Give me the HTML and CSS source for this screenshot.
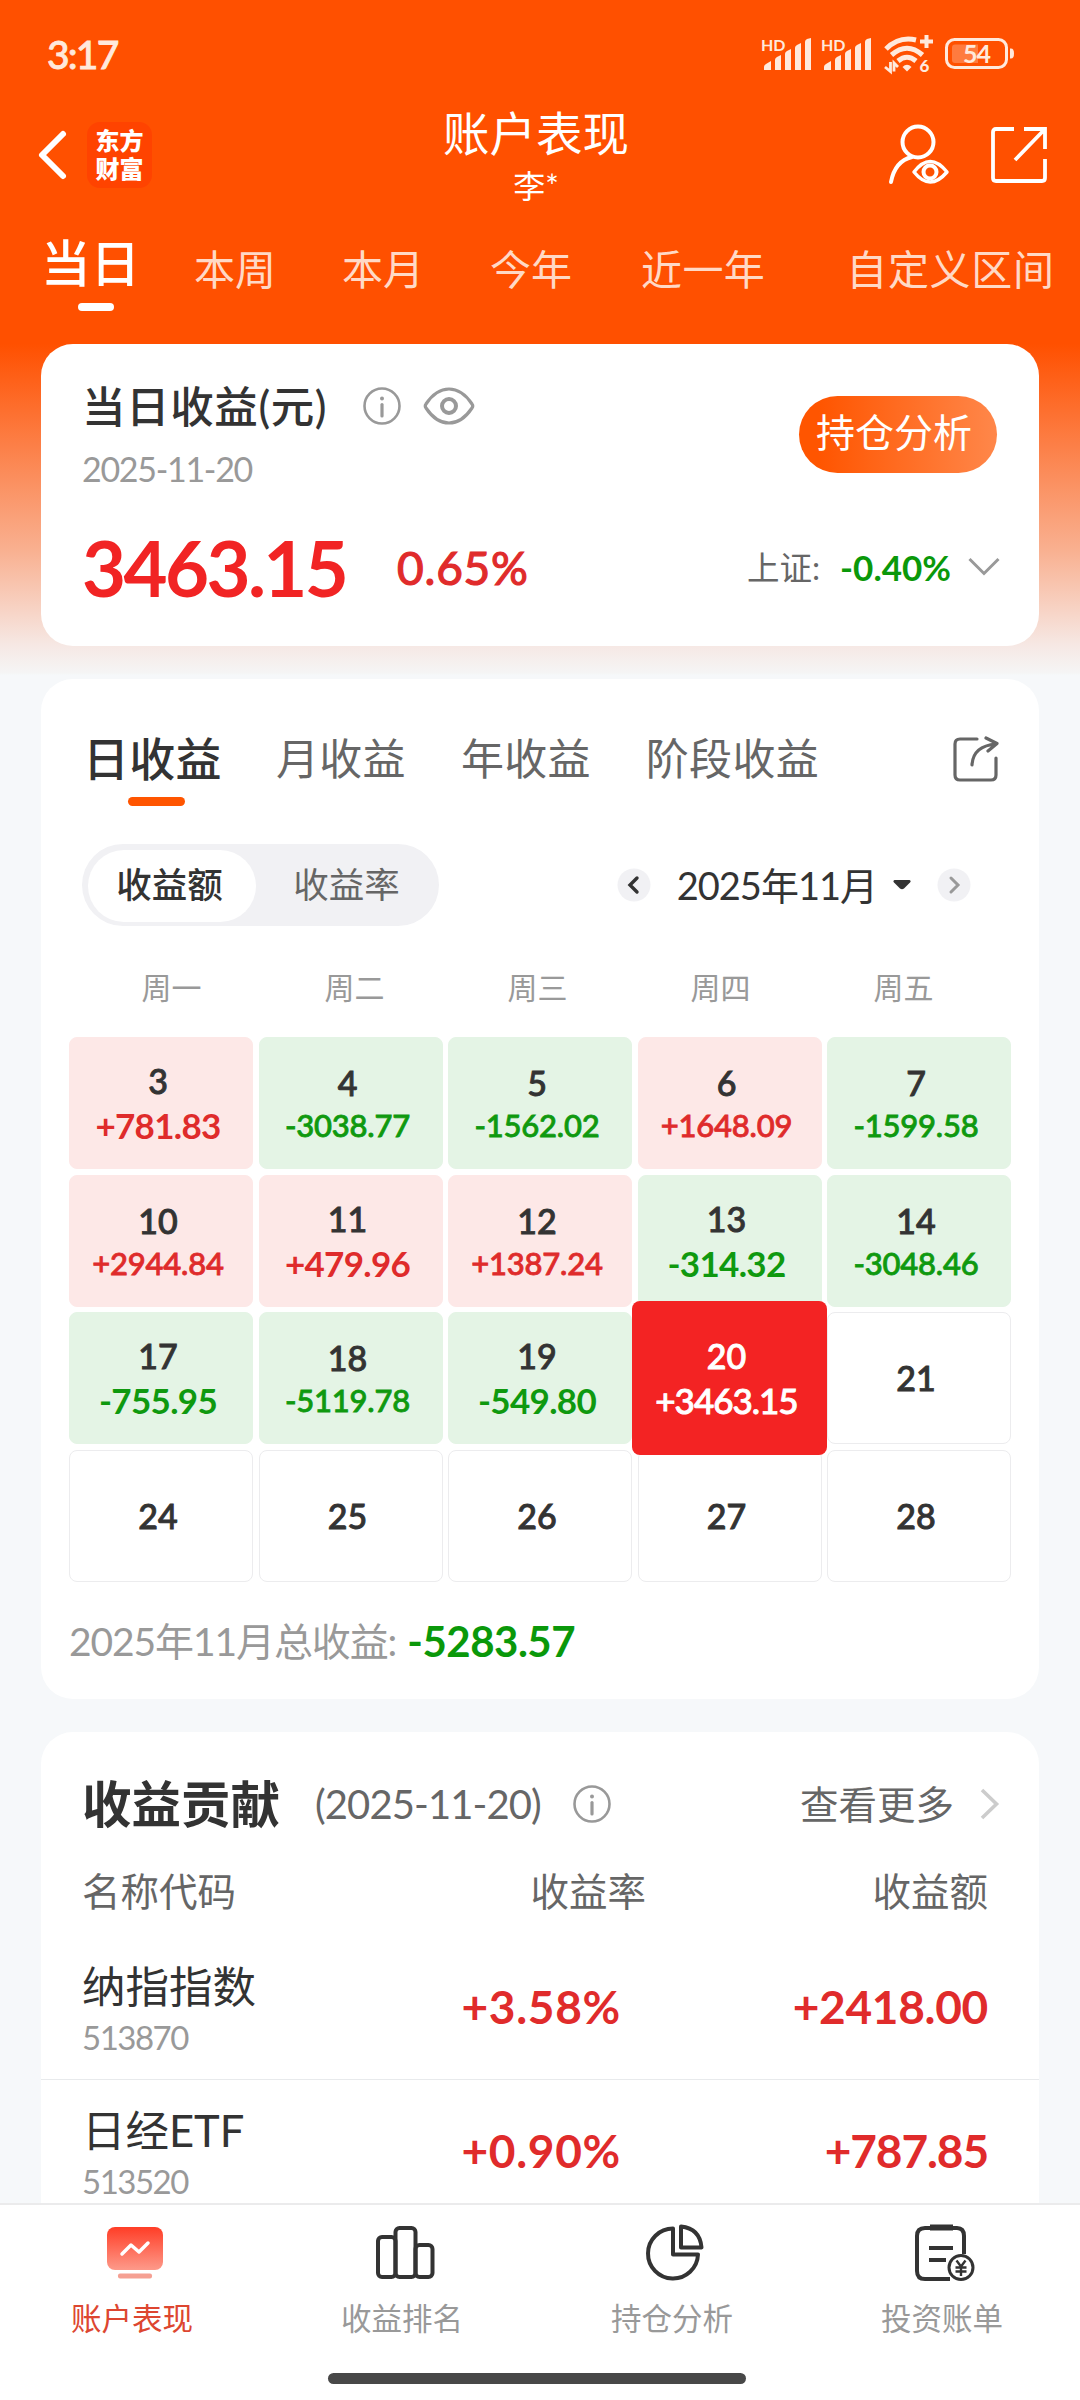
FILE: index.html
```html
<!DOCTYPE html>
<html lang="zh-CN">
<head>
<meta charset="utf-8">
<title>账户表现</title>
<link rel="stylesheet" href="styles.css">
</head>
<body>
<div class="screen">
  <div class="status-bar">
    <span class="clock">3:17</span>
    <div class="status-icons">
      <svg class="signal" width="52" height="36" viewBox="0 0 52 36" fill="#ffe9dc"><text x="0" y="15" class="hd">HD</text><path d="M3 34v-3q0-2 2-3l5-3v9zM14 34V24q0-2 2-3l4-2v15zM24 34V18q0-2 2-3l4-2v21zM34 34V12q0-2 2-3l4-2v27zM44 34V6q0-2 2-3l4-1v32z"/></svg>
      <svg class="signal" width="52" height="36" viewBox="0 0 52 36" fill="#ffe9dc"><text x="0" y="15" class="hd">HD</text><path d="M3 34v-3q0-2 2-3l5-3v9zM14 34V24q0-2 2-3l4-2v15zM24 34V18q0-2 2-3l4-2v21zM34 34V12q0-2 2-3l4-2v27zM44 34V6q0-2 2-3l4-1v32z"/></svg>
      <svg class="wifi" width="50" height="42" viewBox="0 -2 50 42" fill="none" stroke="#ffe9dc"><path d="M2 14Q15 1 32 5" stroke-width="5"/><path d="M7.500 20Q23 6.500 38.500 20" stroke-width="5"/><path d="M14 26Q23 18.500 32 26" stroke-width="5"/><path d="M18.500 32q4.500-4.500 9 0L23 36.500z" fill="#ffe9dc" stroke="none"/><path d="M36 6.500h13M42.500 0v13" stroke-width="4"/><path d="M6.500 27v9.500L1 32M10 36.500V28l4 4" stroke-width="2.800"/><text x="35.500" y="36.500" class="wifi-gen">6</text></svg>
      <svg class="battery" width="70" height="32" viewBox="0 0 70 32"><rect x="1.500" y="1.500" width="60" height="28" rx="8" fill="none" stroke="#ffe9dc" stroke-width="3"/><path d="M10 6.500h23v18.500H10q-3 0-3-3v-12.500q0-3 3-3z" fill="#ff7b3f"/><path d="M65 10.500h1q3 0 3 5t-3 5h-1z" fill="#ffe9dc"/><text x="31.500" y="24.500" class="battery-level">54</text></svg>
    </div>
  </div>

  <header class="header">
    <svg class="back" width="30" height="50" viewBox="0 0 30 50" fill="none" stroke="#fff" stroke-width="6" stroke-linecap="round" stroke-linejoin="round"><path d="M25 4 4 25l21 21"/></svg>
    <div class="logo"><span>东方</span><span>财富</span></div>
    <div class="title"><h1>账户表现</h1><span>李*</span></div>
    <svg class="user-icon" width="62" height="62" viewBox="0 0 62 62" fill="none" stroke="#fff" stroke-width="4" stroke-linecap="round"><ellipse cx="30" cy="18" rx="15.500" ry="15.500"/><path d="M3 58Q7 37 24 33"/><path d="M26 48Q42 27 59 48Q42 68 26 48z" stroke-linejoin="round" stroke-width="3.500"/><circle cx="42" cy="48" r="6.500"/></svg>
    <svg class="open-icon" width="56" height="58" viewBox="0 0 56 58" fill="none" stroke="#fff" stroke-width="3.800"><path d="M23 3H5Q2 3 2 6v46q0 3 3 3h46q3 0 3-3V33"/><path d="M33 3h21v20M54 3 24 34"/></svg>
  </header>

  <nav class="periods">
    <div class="period active"><span>当日</span><i></i></div>
    <div class="period week">本周</div>
    <div class="period">本月</div>
    <div class="period">今年</div>
    <div class="period year">近一年</div>
    <div class="period custom">自定义区间</div>
  </nav>

  <main class="content">
    <section class="card summary">
      <div class="summary-top">
        <div>
          <div class="summary-title">
            <h2>当日收益(元)</h2>
            <svg class="info" width="38" height="38" viewBox="0 0 38 38"><circle cx="19" cy="19" r="17.500" fill="none" stroke="#999" stroke-width="2.600"/><circle cx="19" cy="11.500" r="2" fill="#999"/><path d="M19 17.500v11.500" stroke="#999" stroke-width="3.200" stroke-linecap="round"/></svg>
            <svg class="eye" width="52" height="40" viewBox="0 0 52 40" fill="none" stroke="#999" stroke-width="3.200"><path d="M3 18Q13 3 26 3t23 15q1.500 2 0 4Q39 37 26 37T3 22q-1.500-2 0-4z"/><circle cx="26" cy="20" r="7" stroke-width="4"/></svg>
          </div>
          <div class="summary-date">2025-11-20</div>
        </div>
        <button class="analyse">持仓分析</button>
      </div>
      <div class="summary-bottom">
        <span class="amount">3463.15</span>
        <span class="rate">0.65%</span>
        <span class="index-name">上证:</span>
        <span class="index-rate">-0.40%</span>
        <svg width="32" height="20" viewBox="0 0 32 20" fill="none" stroke="#999" stroke-width="3"><path d="m1.500 2 14.500 14.500L30.500 2"/></svg>
      </div>
    </section>

    <section class="card calendar">
      <div class="cal-tabs">
        <div class="cal-tab active"><span>日收益</span><i></i></div>
        <div class="cal-tab">月收益</div>
        <div class="cal-tab">年收益</div>
        <div class="cal-tab">阶段收益</div>
        <svg class="share" width="46" height="46" viewBox="0 0 46 46" fill="none" stroke="#666" stroke-width="3.200" stroke-linecap="round" stroke-linejoin="round"><path d="M24 3H7Q2 3 2 8v31q0 5 5 5h31q5 0 5-5V22"/><path d="M19 29Q20 10 43 8M33 2l11 5.500L35 15"/></svg>
      </div>
      <div class="cal-controls">
        <div class="segment"><span class="on">收益额</span><span>收益率</span></div>
        <div class="month-nav">
          <svg width="34" height="34" viewBox="0 0 34 34"><circle cx="17" cy="17" r="16.500" fill="#f1f1f4"/><path d="m20 10-7 7 7 7" fill="none" stroke="#333" stroke-width="3.400" stroke-linecap="round"/></svg>
          <span class="month">2025年11月</span>
          <svg class="caret" width="18" height="10" viewBox="0 0 18 10"><path d="M1.500 0h15q2 1 .5 2.500L11 8.500q-2 1.500-4 0L1 2.500Q-.5 1 1.500 0z" fill="#333"/></svg>
          <svg width="34" height="34" viewBox="0 0 34 34"><circle cx="17" cy="17" r="16.500" fill="#f1f1f4"/><path d="m14 10 7 7-7 7" fill="none" stroke="#999" stroke-width="3" stroke-linecap="round"/></svg>
        </div>
      </div>
      <div class="weekdays"><span>周一</span><span>周二</span><span>周三</span><span>周四</span><span>周五</span></div>
      <div class="days">
        <div class="day up"><b>3</b><span>+781.83</span></div>
        <div class="day down long"><b>4</b><span>-3038.77</span></div>
        <div class="day down long"><b>5</b><span>-1562.02</span></div>
        <div class="day up long"><b>6</b><span>+1648.09</span></div>
        <div class="day down long"><b>7</b><span>-1599.58</span></div>
        <div class="day up long"><b>10</b><span>+2944.84</span></div>
        <div class="day up"><b>11</b><span>+479.96</span></div>
        <div class="day up long"><b>12</b><span>+1387.24</span></div>
        <div class="day down"><b>13</b><span>-314.32</span></div>
        <div class="day down long"><b>14</b><span>-3048.46</span></div>
        <div class="day down"><b>17</b><span>-755.95</span></div>
        <div class="day down long"><b>18</b><span>-5119.78</span></div>
        <div class="day down"><b>19</b><span>-549.80</span></div>
        <div class="day selected"><b>20</b><span>+3463.15</span></div>
        <div class="day"><b>21</b></div>
        <div class="day"><b>24</b></div>
        <div class="day"><b>25</b></div>
        <div class="day"><b>26</b></div>
        <div class="day"><b>27</b></div>
        <div class="day"><b>28</b></div>
      </div>
      <div class="total"><span>2025年11月总收益:</span><strong>-5283.57</strong></div>
    </section>

    <section class="card contribution">
      <div class="contrib-head">
        <h2>收益贡献</h2>
        <span class="contrib-date">(2025-11-20)</span>
        <svg class="info" width="38" height="38" viewBox="0 0 38 38"><circle cx="19" cy="19" r="17.500" fill="none" stroke="#999" stroke-width="2.600"/><circle cx="19" cy="11.500" r="2" fill="#999"/><path d="M19 17.500v11.500" stroke="#999" stroke-width="3.200" stroke-linecap="round"/></svg>
        <span class="more">查看更多</span>
        <svg width="20" height="32" viewBox="0 0 20 32" fill="none" stroke="#ccc" stroke-width="3.600"><path d="m2 2 14.500 14L2 30"/></svg>
      </div>
      <div class="columns"><span>名称代码</span><span>收益率</span><span>收益额</span></div>
      <div class="holding">
        <div class="name"><span>纳指指数</span><small>513870</small></div>
        <span class="value percent">+3.58%</span><span class="value">+2418.00</span>
      </div>
      <div class="holding">
        <div class="name"><span>日经ETF</span><small>513520</small></div>
        <span class="value percent">+0.90%</span><span class="value short">+787.85</span>
      </div>
    </section>
  </main>

  <footer class="tabbar">
    <div class="tabs">
      <div class="tab current">
        <svg width="62" height="60" viewBox="0 0 62 60"><defs><linearGradient id="screenFill" x1="0" y1="0" x2="0" y2="1"><stop offset="0" stop-color="#ff3d26"/><stop offset="1" stop-color="#fd9a8a"/></linearGradient></defs><rect x="3" y="5" width="56" height="43" rx="8" fill="url(#screenFill)"/><path d="m18 32 9-9 8 7 9-9" fill="none" stroke="#fff" stroke-width="3.500" stroke-linecap="round" stroke-linejoin="round"/><rect x="14" y="51.500" width="34" height="5" rx="2" fill="#f5a093"/></svg>
        <span>账户表现</span>
      </div>
      <div class="tab">
        <svg width="62" height="60" viewBox="0 0 62 60" fill="none" stroke="#333" stroke-width="4"><rect x="4" y="15" width="17.500" height="40" rx="4"/><rect x="21.500" y="6" width="20" height="49" rx="4"/><rect x="41.500" y="23" width="17" height="32" rx="4"/></svg>
        <span>收益排名</span>
      </div>
      <div class="tab">
        <svg width="62" height="60" viewBox="0 0 62 60" fill="none" stroke="#333" stroke-width="4" stroke-linejoin="round"><path d="M29 6.500A25 25 0 1 0 54 32.500H29z"/><path d="M37 4.500q19 2 20.500 21H37z"/></svg>
        <span>持仓分析</span>
      </div>
      <div class="tab">
        <svg width="62" height="60" viewBox="0 0 62 60" fill="none" stroke="#333" stroke-width="4"><path d="M36 57H11q-8 0-8-8V14q0-8 8-8h32q7 0 7 8v18"/><path d="M16 5.500h23" stroke-width="6"/><path d="M15 26h24M15 38h17"/><circle cx="47" cy="45.500" r="12" stroke-width="3"/><path d="m42.500 38.500 4.500 6 4.500-6M47 44.500V54M41.500 45.500h11M41.500 49.500h11" stroke-width="2.400"/></svg>
        <span>投资账单</span>
      </div>
    </div>
    <div class="home-indicator"></div>
  </footer>
</div>
</body>
</html>
```
FILE: styles.css
```css
* { box-sizing: border-box; margin: 0; padding: 0; }

body {
  width: 1080px;
  height: 2400px;
  font-family: Lato, "Noto Sans CJK SC", sans-serif;
  color: #333;
  overflow: hidden;
}

h1, h2, b, strong { font-weight: 500; }
svg { display: block; flex: none; overflow: visible; }
span, b, strong, small, h1, h2 { white-space: nowrap; }

.screen {
  display: flex;
  flex-direction: column;
  height: 2400px;
  background: linear-gradient(#ff5000 344px, #f9b090 550px, #f6e8e4 645px, #f5f5f5 673px, #f6f8fa 675px);
}

/* status bar */
.status-bar {
  display: flex;
  align-items: center;
  justify-content: space-between;
  height: 101px;
  padding: 7px 65px 0 47px;
  color: #ffe9dc;
}
.clock { font-size: 39px; font-weight: 500; letter-spacing: -1.8px; -webkit-text-stroke: .8px; }
.status-icons { display: flex; align-items: center; }
.signal { margin-right: 8px; }
.wifi { margin: 0 11px 0 3px; }
.hd { font: 700 16px Lato, sans-serif; }
.wifi-gen { font: 900 17px/1 Lato, sans-serif; fill: #ffe9dc; stroke: none; }
.battery-level { font: 700 25px Lato, sans-serif; fill: #ffe9dc; text-anchor: middle; letter-spacing: -1px; }

/* header */
.header { display: flex; align-items: center; height: 108px; padding: 0 33px 0 38px; color: #fff; }
.logo {
  display: flex;
  flex-direction: column;
  align-items: center;
  justify-content: center;
  width: 65px;
  height: 66px;
  margin-left: 19px;
  border-radius: 13px;
  background: #ff4300;
  font-size: 24px;
  font-weight: 900;
  line-height: 28px;
}
.title { display: flex; flex-direction: column; align-items: center; width: 184px; margin-left: 292px; }
.title h1 { font-size: 46.500px; font-weight: 400; line-height: 62px; }
.title span { font-size: 32px; line-height: 44px; }
.user-icon { margin-left: 260px; }
.open-icon { margin-left: auto; }

/* reporting periods */
.periods { display: flex; height: 135px; padding: 26px 0 0 41px; }
.period { margin: 7px 0 0 66px; font-size: 41px; line-height: 56px; color: #ffd9c6; white-space: nowrap; }
.period.active { width: 98px; margin: 0; color: #fff; font-size: 49.500px; font-weight: 500; }
.period.active span { display: block; }
.period.active i { display: block; width: 36px; height: 8px; margin: 12px 0 0 37px; border-radius: 4px; background: #fff; }
.period.week { margin-left: 55px; }
.period.year { margin-left: 69px; letter-spacing: .4px; }
.period.custom { margin-left: 81px; letter-spacing: .7px; }

.content { display: flex; flex-direction: column; gap: 33px; flex: 1; min-height: 0; padding: 0 41px; overflow: hidden; }
.card { flex: none; border-radius: 32px; background: #fff; }

/* summary */
.summary { height: 302px; padding: 0 42px 0 41px; }
.summary-top { display: flex; justify-content: space-between; height: 183px; }
.summary-title { display: flex; align-items: center; height: 56px; margin-top: 34px; }
.summary-title h2 { width: 250px; font-size: 43.500px; line-height: 56px; letter-spacing: .6px; }
.summary-title .info { margin-left: 31px; }
.summary-title .eye { margin-left: 22px; }
.summary-date { margin-top: 15px; font-size: 34px; line-height: 40px; letter-spacing: -1.300px; color: #999; }
.analyse {
  width: 198px;
  height: 77px;
  margin-top: 52px;
  padding: 0 8px 5px 0;
  border: 0;
  border-radius: 39px;
  background: linear-gradient(90deg, #ff5500 10%, #ff874a);
  font: 39px/60px Lato, "Noto Sans CJK SC", sans-serif;
  color: #fff;
}
.summary-bottom { display: flex; align-items: center; height: 80px; line-height: 79px; }
.amount { width: 315px; font-size: 76px; font-weight: 700; letter-spacing: -2.600px; color: #f12424; }
.rate { font-size: 46px; letter-spacing: .8px; -webkit-text-stroke: 1.200px; color: #e02b2b; }
.index-name { margin-left: auto; font-size: 32.500px; color: #666; }
.index-rate { margin: 0 17px 0 20px; font-size: 35px; font-weight: 700; color: #0a980a; }
.summary-bottom svg { margin-right: -3px; }

/* calendar */
.calendar { height: 1020px; padding: 0 28px; }
.cal-tabs { display: flex; height: 165px; padding: 50px 14px 0 14px; font-size: 43px; line-height: 60px; color: #666; }
.cal-tab { margin-right: 55px; letter-spacing: .3px; white-space: nowrap; }
.cal-tab.active { width: 138px; color: #333; font-size: 46px; font-weight: 500; }
.cal-tab.active span { display: block; }
.cal-tab.active i { display: block; width: 57px; height: 9px; margin: 8px 0 0 45px; border-radius: 5px; background: #ff5500; }
.share { margin: 7px -2px 0 auto; }
.cal-controls { display: flex; align-items: center; justify-content: space-between; height: 82px; padding: 0 40px 0 13px; }
.segment { display: flex; width: 357px; height: 82px; padding: 6px 5px 4px 6px; border-radius: 41px; background: #f1f1f4; color: #666; font-size: 35.500px; line-height: 70px; }
.segment span { width: 181px; flex: none; text-align: center; }
.segment .on { width: 168px; padding-right: 5px; border-radius: 36px; background: #fff; color: #333; font-weight: 500; }
.month-nav { display: flex; align-items: center; }
.month { margin-left: 26px; font-size: 38px; line-height: 60px; letter-spacing: -1px; }
.caret { margin: 0 26px 0 16px; }
.weekdays { display: grid; grid-template-columns: repeat(5, 183px); height: 111px; padding-left: 11px; color: #999; font-size: 30px; line-height: 122px; text-align: center; }
.days { display: grid; grid-template-columns: repeat(5, 184px); grid-auto-rows: 132px; gap: 5.500px; }
.day {
  display: flex;
  flex-direction: column;
  align-items: center;
  justify-content: center;
  padding-right: 6px;
  border: 1px solid #ececee;
  border-radius: 8px;
  font-size: 35px;
  line-height: 44px;
}
.day b { font-size: 34px; -webkit-text-stroke: .9px; }
.day span { font-weight: 700; letter-spacing: -.7px; }
.day.long span { font-size: 31px; line-height: 40px; font-weight: 500; letter-spacing: -.2px; -webkit-text-stroke: .8px; }
.day.up { border-color: #fde8e7; background: #fde8e7; color: #df2b2b; }
.day.down { border-color: #e4f4e5; background: #e4f4e5; color: #0f990f; }
.day.up b, .day.down b { color: #333; }
.day.selected { z-index: 1; margin: -11px -5.500px; border: 0; background: #f32323; color: #fff; }
.day.selected span { font-weight: 500; letter-spacing: -1px; -webkit-text-stroke: .9px; }
.total { display: flex; height: 60px; margin-top: 29px; font-size: 39px; line-height: 60px; color: #999; }
.total span { letter-spacing: -1.100px; }
.total strong { margin-left: 11px; font-size: 42px; font-weight: 700; letter-spacing: -.5px; color: #0a980a; }

/* contribution */
.contribution { height: 600px; }
.contrib-head { display: flex; align-items: center; height: 88px; margin-top: 28px; padding: 0 39px 0 41px; line-height: 86px; }
.contrib-head h2 { width: 233px; font-size: 49.500px; font-weight: 700; }
.contrib-date { width: 228px; font-size: 40px; letter-spacing: -.9px; color: #666; }
.contrib-head .info { margin-left: 30px; }
.more { margin: 0 26px 0 auto; font-size: 38.500px; color: #666; }
.columns, .holding { display: grid; grid-template-columns: 302px 262px 342px; padding: 0 50px 0 41px; }
.columns { height: 88px; color: #666; font-size: 38.500px; line-height: 86px; }
.columns span:not(:first-child), .value { text-align: right; }
.holding { height: 144px; border-bottom: 1px solid #e8eaec; }
.name { display: flex; flex-direction: column; padding-top: 20px; }
.name span { font-size: 43.500px; line-height: 60px; }
.name small { font-size: 33px; line-height: 43px; letter-spacing: -1.500px; color: #999; }
.value { font-size: 46px; font-weight: 700; line-height: 142px; letter-spacing: -.3px; color: #e02b2b; }
.value.percent { padding-right: 25px; letter-spacing: .7px; }
.value.short { letter-spacing: -1.100px; }

/* bottom navigation */
.tabbar { height: 197px; border-top: 2px solid #ebebec; background: #fff; }
.tabs { display: grid; grid-template-columns: repeat(4, 1fr); height: 168px; padding-top: 17px; }
.tab { display: flex; flex-direction: column; align-items: center; color: #999; font-size: 30.500px; line-height: 40px; }
.tab span { margin: 16px 6px 0 0; }
.tab.current { color: #dd4630; }
.home-indicator { width: 418px; height: 11px; margin-left: 328px; border-radius: 6px; background: #484848; }
```
